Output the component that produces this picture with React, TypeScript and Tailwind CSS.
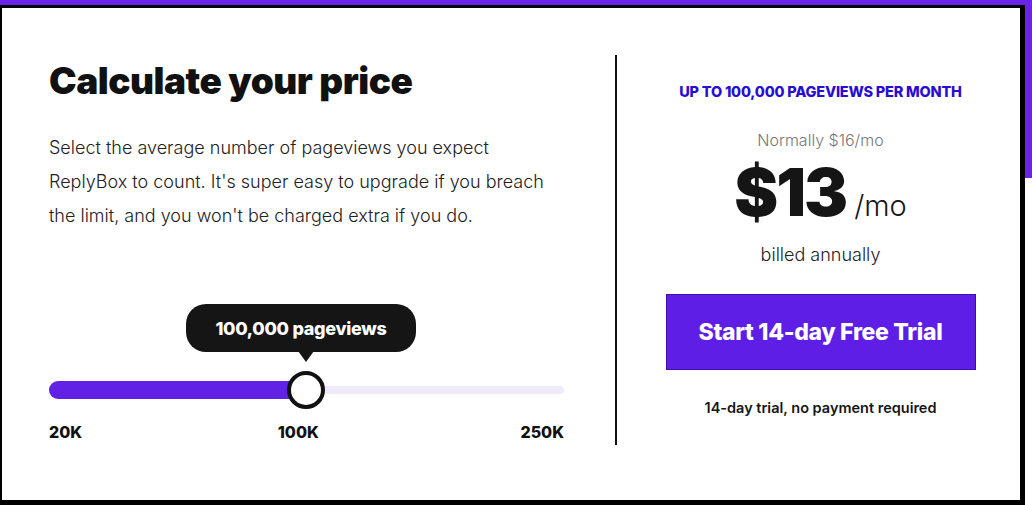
import React from "react";

export default function App() {
  const font = { fontFamily: "Inter, 'Noto Sans', sans-serif" };
  return (
    <div className="relative w-[1032px] h-[505px] bg-white overflow-hidden" style={font}>
      <div className="absolute left-0 top-0 w-[1032px] h-[5px] bg-[#6a24e8]" />
      <div className="absolute right-0 top-0 w-[7px] h-[178px] bg-[#6a24e8]" />
      <div className="absolute left-0 top-[5px] w-[1025px] h-[500px] border-l-[2px] border-t-[3px] border-r-[5px] border-b-[5px] border-black bg-white flex">
        <div className="w-[562px] pl-[47px] pt-[51px] flex flex-col">
          <h1 className="text-[37px] leading-[44px] font-black text-[#111] tracking-[-0.5px]">Calculate your price</h1>
          <p className="mt-[28px] text-[18px] leading-[34px] text-[#222] w-[500px] font-light">
            Select the average number of pageviews you expect ReplyBox to count. It's super easy to upgrade if you breach the limit, and you won't be charged extra if you do.
          </p>
          <div className="relative mt-[71px] w-[515px] h-[66px]">
            <div className="absolute left-[137px] top-0 w-[230px] h-[48px] rounded-[20px] bg-[#151515] flex items-center justify-center">
              <span className="text-white text-[18px] font-extrabold tracking-[-0.3px]">100,000 pageviews</span>
            </div>
            <div className="absolute left-[249px] top-[47px] w-0 h-0 border-l-[8px] border-r-[8px] border-t-[11px] border-l-transparent border-r-transparent border-t-[#151515]" />
          </div>
          <div className="relative w-[515px] h-[40px]">
            <div className="absolute left-0 right-0 top-[16px] h-[8px] rounded-full bg-[#efe9fb]" />
            <div className="absolute left-0 w-[260px] top-[11px] h-[18px] rounded-full bg-[#6222e6]" />
            <div className="absolute left-[238px] top-[1px] w-[38px] h-[38px] rounded-full bg-white border-[4px] border-[#111]" />
          </div>
          <div className="mt-[10px] w-[515px] flex justify-between text-[16px] font-extrabold text-[#111]">
            <span>20K</span>
            <span className="-ml-[6px]">100K</span>
            <span>250K</span>
          </div>
        </div>
        <div className="ml-[51px] mt-[47px] w-[2px] h-[390px] bg-[#111]" />
        <div className="flex-1 pl-[4px] flex flex-col items-center pt-[73px]">
          <div className="text-[14.5px] font-extrabold text-[#2a0cd4] tracking-[-0.2px]">UP TO 100,000 PAGEVIEWS PER MONTH</div>
          <div className="mt-[25px] text-[16px] text-[#777] font-light">Normally $16/mo</div>
          <div className="flex items-baseline mt-[4px]">
            <span className="text-[66px] leading-[72px] font-black text-[#151515] tracking-[-2px]">$13</span>
            <span className="ml-[8px] text-[29px] font-light text-[#151515]">/mo</span>
          </div>
          <div className="mt-[13px] text-[18px] text-[#222] font-light">billed annually</div>
          <button className="mt-[26px] w-[310px] h-[76px] bg-[#5f1ee6] border border-[#3a10b5] text-white text-[23px] font-extrabold tracking-[-0.3px]">Start 14-day Free Trial</button>
          <div className="mt-[27px] text-[14.5px] font-semibold text-[#151515]">14-day trial, no payment required</div>
        </div>
      </div>
    </div>
  );
}
